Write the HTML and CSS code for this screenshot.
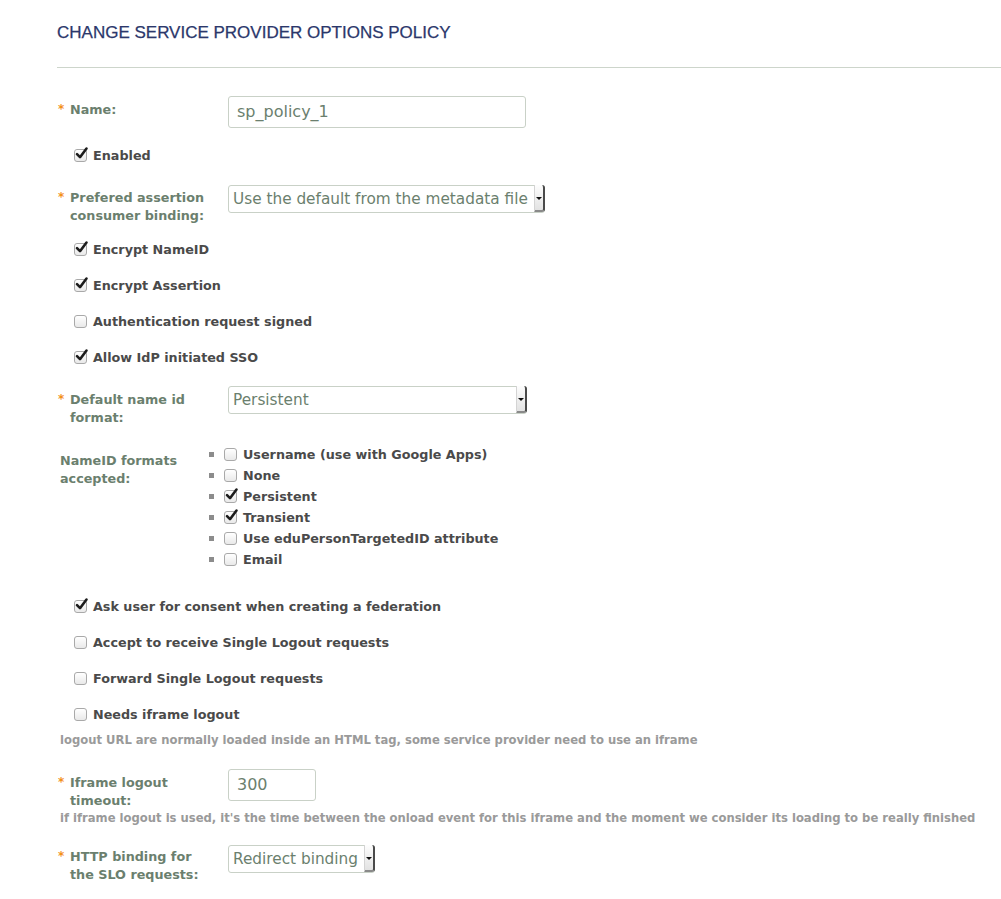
FILE: index.html
```html
<!DOCTYPE html>
<html>
<head>
<meta charset="utf-8">
<link rel="stylesheet" href="styles.css">
</head>
<body>
<div class="page">
  <h1 class="title">CHANGE SERVICE PROVIDER OPTIONS POLICY</h1>
  <hr class="rule">
  <form class="form">
    <div class="row r-name">
      <div class="label"><span class="star">*</span><span class="ltext">Name:</span></div>
      <div class="field"><div class="input wide">sp_policy_1</div></div>
    </div>

    <div class="check c-enabled"><span class="box on"><svg viewBox="0 0 14 14"><path d="M3 7.2 L6 10.2 L12.5 1.5"/></svg></span>Enabled</div>

    <div class="row r-binding">
      <div class="label"><span class="star">*</span><span class="ltext">Prefered assertion consumer binding:</span></div>
      <div class="field"><div class="select"><span class="stext">Use the default from the metadata file</span><span class="sbtn"><i></i></span></div></div>
    </div>

    <div class="checks c-first">
      <div class="check"><span class="box on"><svg viewBox="0 0 14 14"><path d="M3 7.2 L6 10.2 L12.5 1.5"/></svg></span>Encrypt NameID</div>
      <div class="check"><span class="box on"><svg viewBox="0 0 14 14"><path d="M3 7.2 L6 10.2 L12.5 1.5"/></svg></span>Encrypt Assertion</div>
      <div class="check"><span class="box"></span>Authentication request signed</div>
      <div class="check"><span class="box on"><svg viewBox="0 0 14 14"><path d="M3 7.2 L6 10.2 L12.5 1.5"/></svg></span>Allow IdP initiated SSO</div>
    </div>

    <div class="row r-format">
      <div class="label"><span class="star">*</span><span class="ltext">Default name id format:</span></div>
      <div class="field"><div class="select fixed"><span class="stext">Persistent</span><span class="sbtn"><i></i></span></div></div>
    </div>

    <div class="row r-accepted">
      <div class="label nostar"><span class="ltext">NameID formats accepted:</span></div>
      <ul class="formats">
        <li><span class="box"></span>Username (use with Google Apps)</li>
        <li><span class="box"></span>None</li>
        <li><span class="box on"><svg viewBox="0 0 14 14"><path d="M3 7.2 L6 10.2 L12.5 1.5"/></svg></span>Persistent</li>
        <li><span class="box on"><svg viewBox="0 0 14 14"><path d="M3 7.2 L6 10.2 L12.5 1.5"/></svg></span>Transient</li>
        <li><span class="box"></span>Use eduPersonTargetedID attribute</li>
        <li><span class="box"></span>Email</li>
      </ul>
    </div>

    <div class="checks c-second">
      <div class="check"><span class="box on"><svg viewBox="0 0 14 14"><path d="M3 7.2 L6 10.2 L12.5 1.5"/></svg></span>Ask user for consent when creating a federation</div>
      <div class="check"><span class="box"></span>Accept to receive Single Logout requests</div>
      <div class="check"><span class="box"></span>Forward Single Logout requests</div>
      <div class="check"><span class="box"></span>Needs iframe logout</div>
    </div>
    <p class="help h-first">logout URL are normally loaded inside an HTML tag, some service provider need to use an iframe</p>

    <div class="row r-timeout">
      <div class="label"><span class="star">*</span><span class="ltext">Iframe logout timeout:</span></div>
      <div class="field"><div class="input short">300</div></div>
    </div>
    <p class="help h-second">if iframe logout is used, it's the time between the onload event for this iframe and the moment we consider its loading to be really finished</p>

    <div class="row r-slo">
      <div class="label"><span class="star">*</span><span class="ltext">HTTP binding for the SLO requests:</span></div>
      <div class="field"><div class="select"><span class="stext">Redirect binding</span><span class="sbtn"><i></i></span></div></div>
    </div>
  </form>
</div>
</body>
</html>
```

FILE: styles.css
```css
html, body {
  margin: 0;
  padding: 0;
  background: #ffffff;
}

.page {
  padding: 23px 0 0 57px;
  font-family: "DejaVu Sans", Verdana, sans-serif;
}

.title {
  margin: 0;
  font-family: "Liberation Sans", Arial, sans-serif;
  font-weight: normal;
  font-size: 17px;
  line-height: 20px;
  color: #2b376b;
  -webkit-text-stroke: 0.25px #2b376b;
}

.rule {
  margin: 24px 0 0 0;
  border: 0;
  border-top: 1px solid #cdd5cb;
  height: 0;
}

.form {
  padding-top: 28px;
  padding-left: 1px;
}

.row {
  display: grid;
  grid-template-columns: 170px auto;
  align-items: start;
}

.label {
  display: flex;
  align-items: flex-start;
  font-weight: bold;
  font-size: 12.75px;
  line-height: 18px;
  color: #6b7f6e;
}

.star {
  width: 12px;
  flex: none;
  color: #f39019;
  font-size: 12px;
  line-height: 17px;
}

.ltext {
  width: 140px;
}

.label.nostar {
  padding-left: 2px;
}

.field {
  display: flex;
}

.input {
  box-sizing: border-box;
  height: 32px;
  border: 1px solid #c9d1c7;
  border-radius: 3px;
  padding: 0 8px;
  font-size: 16px;
  line-height: 30px;
  color: #6b7f6e;
  background: #fff;
}

.input.wide { width: 298px; }
.input.short { width: 88px; }

.select {
  box-sizing: border-box;
  display: flex;
  height: 28px;
  border: 1px solid #c9d1c7;
  border-radius: 3px;
  background: #fff;
  color: #6b7f6e;
  font-size: 15.3px;
  line-height: 26px;
}

.select.fixed { width: 299px; }

.stext {
  flex: 1;
  padding: 0 6px 0 4px;
  white-space: nowrap;
}

.sbtn {
  position: relative;
  width: 8px;
  margin: -1px -1px 0 0;
  background: linear-gradient(#fdfdfd, #e2e2e2);
  border-left: 1px solid #d4d4d4;
  border-right: 2px solid #4a4a4a;
  border-bottom: 2px solid #8a8a8a;
  border-radius: 0 3px 3px 0;
}

.sbtn i {
  position: absolute;
  left: 1px;
  top: 12px;
  width: 0;
  height: 0;
  border-left: 3px solid transparent;
  border-right: 3px solid transparent;
  border-top: 3px solid #111;
}

.check, .formats li {
  display: flex;
  align-items: center;
  font-weight: bold;
  font-size: 12.75px;
  color: #4a4a4a;
}

.check {
  height: 36px;
  padding-left: 16px;
}

.box {
  box-sizing: border-box;
  position: relative;
  flex: none;
  width: 13px;
  height: 13px;
  margin-right: 6px;
  border: 1px solid #a9a9a9;
  border-radius: 3px;
  background: linear-gradient(#ffffff, #e9e9e9);
}

.box svg {
  position: absolute;
  left: -1px;
  top: -3px;
  width: 14px;
  height: 14px;
  overflow: visible;
}

.box svg path {
  fill: none;
  stroke: #1c1c1c;
  stroke-width: 2.6;
  stroke-linecap: round;
  stroke-linejoin: round;
}

.r-name .label { padding-top: 5px; }
.c-enabled { margin-top: 9px; }
.r-binding { margin-top: 12px; }
.r-binding .label { padding-top: 4px; }
.c-first { margin-top: 6px; }
.r-format { margin-top: 11px; }
.r-format .label { padding-top: 5px; }

.r-accepted { margin-top: 17px; }
.r-accepted .label { padding-top: 8px; }

.formats {
  margin: 0;
  padding: 0;
  list-style: none;
}

.formats li {
  height: 21px;
  margin-left: -19px;
}

.formats li::before {
  content: "";
  width: 5px;
  height: 5px;
  background: #8c8c8c;
  margin-right: 10px;
  flex: none;
}

.c-second { margin-top: 18px; }

.help {
  margin: 0;
  padding-left: 2px;
  font-weight: bold;
  font-size: 11.6px;
  line-height: 14px;
  color: #9a9a9a;
  white-space: nowrap;
}

.h-first { margin-top: 1px; }
.r-timeout { margin-top: 22px; }
.r-timeout .label { padding-top: 5px; }
.h-second { margin-top: 1px; }
.r-slo { margin-top: 20px; }
.r-slo .label { padding-top: 3px; }
```
